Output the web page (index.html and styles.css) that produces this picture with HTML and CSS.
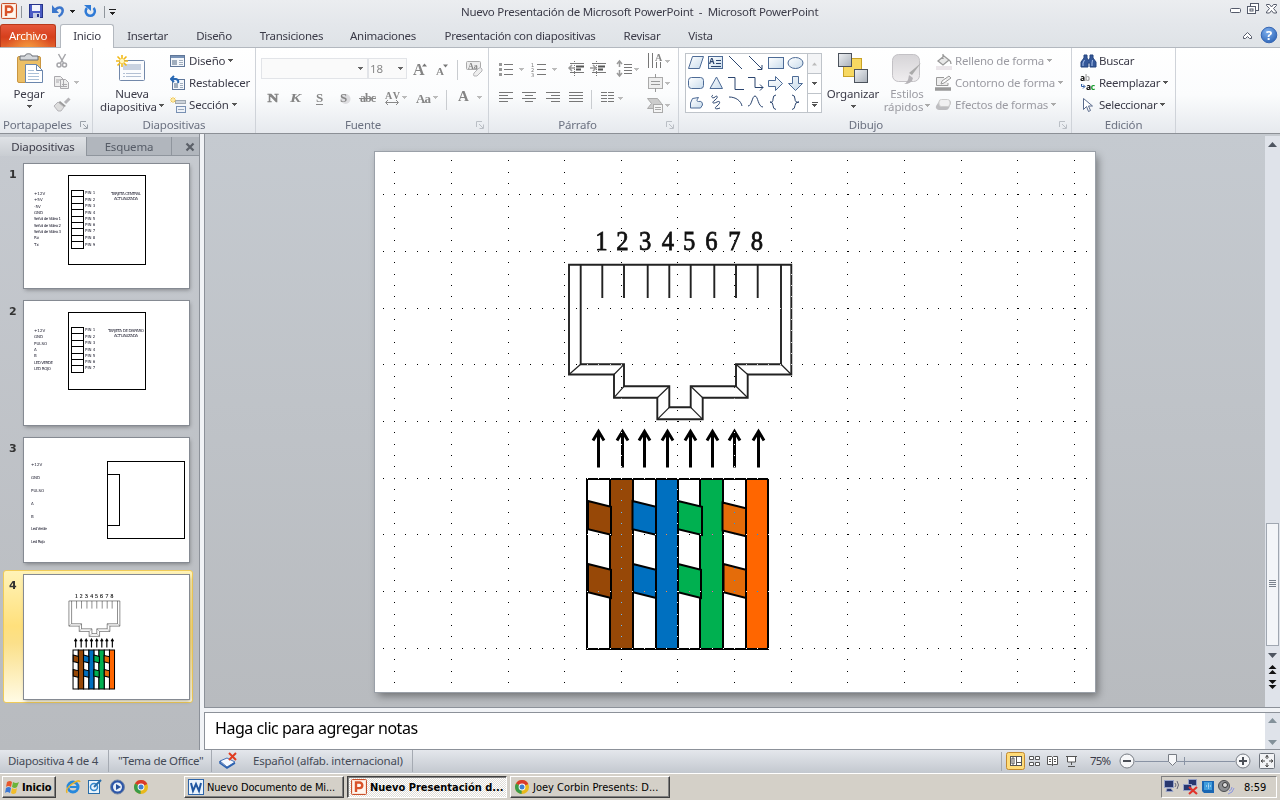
FILE: index.html
```html
<!DOCTYPE html>
<html lang="es">
<head>
<meta charset="utf-8">
<title>Nuevo Presentación de Microsoft PowerPoint</title>
<link rel="stylesheet" href="styles.css">
</head>
<body>
<svg class="defs" width="0" height="0">
  <defs>
    <linearGradient id="gBlue" x1="0" y1="0" x2="1" y2="1"><stop offset="0" stop-color="#fff"/><stop offset="1" stop-color="#c9dcec"/></linearGradient>
    <linearGradient id="gGray" x1="0" y1="0" x2="1" y2="1"><stop offset="0" stop-color="#eef0f3"/><stop offset="1" stop-color="#a9b0b9"/></linearGradient>
    <linearGradient id="gSoft" x1="0" y1="0" x2="0" y2="1"><stop offset="0" stop-color="#d6d4d7"/><stop offset="1" stop-color="#efedef"/></linearGradient>
    <radialGradient id="gHelp" cx=".4" cy=".3" r=".8"><stop offset="0" stop-color="#7fb0ee"/><stop offset="1" stop-color="#2860b4"/></radialGradient>
    <path id="car" d="M0 0h5v1h-1v1h-1v1h-1v-1h-1v-1h-1z"/>
    <g id="launch" fill="none" stroke="#9ba1a9"><path d="M.5 6V.5H6"/><path d="M3 3l4 4M7.500 3.500v4h-4"/></g>
    <g id="pp"><rect x=".5" y=".5" width="15" height="15" rx="1" fill="#fbe3d5" stroke="#c8502a"/><rect x="2" y="2" width="12" height="12" fill="#fff6ef"/><path d="M5 13V3.500h3.500a2.700 2.700 0 0 1 0 5.600H5" fill="none" stroke="#d9532a" stroke-width="2.400"/></g>
    <g id="chrome"><circle cx="7" cy="7" r="7" fill="#e9b91c"/><path d="M7 7L1 3.400A7 7 0 0 1 13.300 4z" fill="#d93a2b"/><path d="M7 7L1 3.400A7 7 0 0 0 6.500 14z" fill="#3a9b48"/><circle cx="7" cy="7" r="3.400" fill="#fff"/><circle cx="7" cy="7" r="2.500" fill="#3f7fd0"/></g>
    <g id="spark" stroke="#f2b917" stroke-width="1.600"><path d="M6 0v12M0 6h12M1.500 1.500l9 9M10.500 1.500l-9 9"/><circle cx="6" cy="6" r="2.200" fill="#fff7c0" stroke="none"/></g>
    <g id="figure">
      <g class="jack">
        <path d="M569 264.700V374.500H614V397.700H657.300V419.300H702.700V397.700H747.700V374.500H791.300V264.700Z"/>
        <path d="M580.700 264.700V364.300H624V386.300H669.300V407.300H690.700V386.300H736V364.300H781V264.700"/>
        <path d="M602.300 265v33M624 265v33M647.700 265v33M669.300 265v33M690.700 265v33M714.300 265v33M736 265v33M757.700 265v33"/>
        <path class="miter" d="M569 374.500l11.700-10.200M614 374.500l10-10.200M614 397.700l10-11.400M657.300 397.700l12-11.400M657.300 419.300l12-12M702.700 419.300l-12-12M702.700 397.700l-12-11.400M747.700 397.700l-11.700-11.400M747.700 374.500l-11.700-10.200M791.300 374.500l-10.300-10.200"/>
      </g>
      <g class="digits" transform="scale(.88 1)"><text x="683.500" y="250">1</text><text x="707.400" y="250">2</text><text x="733" y="250">3</text><text x="759" y="250">4</text><text x="783" y="250">5</text><text x="808.300" y="250">6</text><text x="834.700" y="250">7</text><text x="860" y="250">8</text></g>
      <path class="arrows" d="M598.500 467.500V432m-5.500 8.500l5.500-9 5.500 9M622.500 467.500V432m-5.500 8.500l5.500-9 5.500 9M644.500 467.500V432m-5.500 8.500l5.500-9 5.500 9M667.500 467.500V432m-5.500 8.500l5.500-9 5.500 9M690.500 467.500V432m-5.500 8.500l5.500-9 5.500 9M712.500 467.500V432m-5.500 8.500l5.500-9 5.500 9M734.500 467.500V432m-5.500 8.500l5.500-9 5.500 9M758.500 467.500V432m-5.500 8.500l5.500-9 5.500 9"/>
      <g class="wires">
        <g fill="#fff"><path d="M587 479h23v170h-23zM633 479h23v170h-23zM678 479h22v170h-22zM723 479h23v170h-23z"/></g>
        <path fill="#974807" d="M610 479h23v170h-23z"/>
        <path fill="#0070c0" d="M656 479h22v170h-22z"/>
        <path fill="#00b050" d="M700 479h23v170h-23z"/>
        <path fill="#ff6600" d="M746 479h22v170h-22z"/>
        <path fill="#974807" d="M588 501l23 5.700v28l-23-5.400zM588 564l23 5.700v28.300l-23-5.700z"/>
        <path fill="#0070c0" d="M632.500 501l23.500 5.700v28l-23.500-5.400zM633 564l23 5.700v28.300l-23-5.700z"/>
        <path fill="#00b050" d="M678 501l24 5.700v28.300l-24-5.700zM678 564l23 5.700v28.300l-23-5.700z"/>
        <path fill="#e46c0a" d="M722.500 502.500l23.500 5.700v28l-23.500-5.700zM723.500 564l22.500 5.700v28.300l-22.500-5.700z"/>
      </g>
    </g>
  </defs>
</svg>

<div class="app">
  <header class="titlebar">
    <svg class="quick" width="120" height="24" viewBox="0 0 120 24">
      <use href="#pp" x="1" y="3"/>
      <path d="M21.500 6v12M104.500 6v12" stroke="#8f959c"/>
      <rect x="29.500" y="4.500" width="13" height="13" fill="#4a5cc4" stroke="#26348a"/><rect x="32" y="5" width="8" height="6" fill="#f3f5fb"/><rect x="33" y="13" width="7" height="5" fill="#c7cfe4"/><rect x="37" y="14" width="2" height="3" fill="#26348a"/>
      <path d="M55.500 9.500c4-4 8-1.500 7 2.500-.5 2-2 3.500-4 4.500" fill="none" stroke="#3b76cc" stroke-width="2.500"/><path d="M52 5v8h7z" fill="#3b76cc"/>
      <use href="#car" x="70" y="10" fill="#222"/>
      <path d="M93.500 8a4.600 4.600 0 1 1-6.500 0" fill="none" stroke="#2f7ad6" stroke-width="2.500"/><path d="M84 5h7v6z" fill="#2f7ad6"/>
      <path d="M109 9.500h7" stroke="#222"/><use href="#car" x="110" y="12" fill="#222"/>
    </svg>
    <span class="caption">Nuevo Presentación de Microsoft PowerPoint &nbsp;-&nbsp; Microsoft PowerPoint</span>
    <svg class="winbtns" width="54" height="24" viewBox="1226 0 54 24" fill="#fff" stroke="#555b6b">
      <rect x="1230.500" y="8.500" width="10" height="4" rx="1"/><rect x="1250.500" y="3.500" width="8" height="7"/><rect x="1247.500" y="6.500" width="8" height="7"/><rect x="1250" y="9" width="3" height="2"/>
      <path d="M1266.500 4.500h3l2 2.500 2-2.500h3v1l-3 3 3 3.500v1h-3l-2-2.500-2 2.500h-3v-1l3-3.500-3-3z"/>
    </svg>
  </header>
  <nav class="tabs">
    <span class="tab file">Archivo</span><span class="tab active">Inicio</span><span class="tab w67">Insertar</span><span class="tab w66">Diseño</span><span class="tab w89">Transiciones</span><span class="tab w94">Animaciones</span><span class="tab w180">Presentación con diapositivas</span><span class="tab w64">Revisar</span><span class="tab w53">Vista</span>
    <svg class="help" width="44" height="24" viewBox="1236 24 44 24"><path d="M1243.500 36.500l4-4 4 4v2h-2l-2-2-2 2h-2z" fill="#fff" stroke="#555b6b"/><circle cx="1269" cy="35" r="7.800" fill="url(#gHelp)" stroke="#3767b4"/><text x="1269" y="40" class="q">?</text></svg>
  </nav>

  <section class="ribbon">
    <div class="group g-clip">
      <div class="body">
        <div class="big"><svg width="28" height="36" viewBox="15 50 28 36"><rect x="17.500" y="56.500" width="23" height="26" rx="1.500" fill="#ecbf66" stroke="#c99641"/><path d="M20 60v-4h5c0-3 7-3 7 0h6v4z" fill="#d4d7db" stroke="#6a6f76"/><path d="M25.500 64.500h11l6 6v12h-17z" fill="#fff" stroke="#6a86ad"/><path d="M36.500 64.500v6h6" fill="none" stroke="#6a86ad"/><path d="M28 70.500h6M28 73.500h11M28 76.500h11M28 79.500h11" stroke="#aac0d8"/></svg><span>Pegar</span><svg width="7" height="5" fill="#555"><use href="#car" x="1" y="1"/></svg></div>
        <svg width="32" height="70" viewBox="52 48 32 70"><g fill="none" stroke="#a6a6aa" stroke-width="1.500"><path d="M58.500 54l5 9M65.500 54l-5 9"/><circle cx="59" cy="65" r="2"/><circle cx="64.500" cy="65" r="2"/></g><g fill="#eee" stroke="#aaa9ad"><path d="M54.500 76.500h6l3 3v7h-9zM60.500 79.500h5l3 3v6h-8z"/><path d="M62 84.500h5M62 86.500h5M56 80h4M56 82h3"/></g><use href="#car" x="74" y="81" fill="#bbb"/><path d="M69.500 98.500l-4.500 4.500" stroke="#b5b4b8" stroke-width="3"/><path d="M60 101l6 5-2 1-6-4z" fill="#999"/><path d="M58 102l6 5-3 4h-3l-4-5z" fill="#ddd" stroke="#b5b4b8"/></svg>
      </div>
      <div class="label"><span>Portapapeles</span><svg width="8" height="8"><use href="#launch"/></svg></div>
    </div>
    <div class="group g-slides">
      <div class="body">
        <div class="big"><svg width="34" height="36" viewBox="114 50 34 36"><rect x="119.500" y="60.500" width="25" height="20" rx="1" fill="#fbfcfe" stroke="#7288aa"/><rect x="123" y="64" width="18" height="6" fill="#c9d2e1"/><path d="M123 73.500h18M123 76.500h18" stroke="#b3c0d4" stroke-dasharray="2 1 20"/><use href="#spark" x="116" y="55"/></svg><span>Nueva</span><span class="drop">diapositiva<svg width="7" height="4" fill="#555"><use href="#car" x="2"/></svg></span></div>
        <div class="stack">
          <div><svg width="17" height="16"><rect x=".5" y="2.500" width="14" height="11" fill="#f4f7fb" stroke="#5f7698"/><path d="M1 4h13" stroke="#7792b7" stroke-width="2"/><path d="M2 7h5v5h-5z" fill="#a0adbd"/><path d="M9 7.500h4M9 9.500h4M9 11.500h4" stroke="#a0adbd"/></svg><span>Diseño</span><svg width="7" height="4" fill="#555"><use href="#car" x="1"/></svg></div>
          <div><svg width="17" height="16"><rect x="2.500" y="4.500" width="12" height="10" fill="#f4f7fb" stroke="#5f7698"/><path d="M4 8h4v5h-4z" fill="#a0adbd"/><path d="M10 8.500h3M10 10.500h3M10 12.500h3" stroke="#a0adbd"/><path d="M1 4h5q3 1 2 4M4 1L1 4l3 3" fill="none" stroke="#2868b3" stroke-width="2"/></svg><span>Restablecer</span></div>
          <div><svg width="17" height="16"><rect x="5.500" y="3.500" width="10" height="3" fill="#cdd3da" stroke="#9ea7b1"/><rect x="6.500" y="9.500" width="9" height="6" fill="#eef2f8" stroke="#7890b3"/><path d="M8 12.500h6" stroke="#9ba9ba"/><use href="#spark" transform="scale(.5)"/></svg><span>Sección</span><svg width="7" height="4" fill="#555"><use href="#car" x="1"/></svg></div>
        </div>
      </div>
      <div class="label"><span>Diapositivas</span></div>
    </div>
    <div class="group g-font">
      <svg class="tools" width="232" height="70" viewBox="257 48 232 70">
        <rect x="261.500" y="58.500" width="106" height="20" fill="#fafafa" stroke="#e2e4e8"/><rect x="368.500" y="58.500" width="38" height="20" fill="#fafafa" stroke="#e2e4e8"/>
        <g fill="#666"><use href="#car" x="358" y="67"/><use href="#car" x="398" y="67"/></g>
        <text class="ui" x="370" y="73" fill="#888" textLength="13">18</text>
        <circle cx="345.500" cy="99" r="5" fill="#dddde0"/>
        <g class="serif"><text x="413" y="75" font-size="16">A</text><text x="436" y="75" font-size="11">A</text><text x="267.500" y="102" font-size="13" stroke="#858585" stroke-width=".5" textLength="11" lengthAdjust="spacingAndGlyphs">N</text><text x="290" y="102" font-size="13" font-style="italic" textLength="11" lengthAdjust="spacingAndGlyphs">K</text><text x="316" y="102" font-size="13">S</text><text x="340" y="102" font-size="13">S</text><text x="360" y="102" font-size="12" textLength="16">abc</text><text x="385" y="99" font-size="10" textLength="15">AV</text><text x="416" y="103" font-size="13" textLength="15">Aa</text><text x="458" y="101" font-size="15">A</text></g>
        <path d="M316 104.500h7M359 98.500h17M386 102.500h12M388 100l-2.500 2.500L388 105M396 100l2.500 2.500L396 105" stroke="#888" fill="none"/>
        <path d="M422 66.500h5l-2.500-3zM443 64.500h5l-2.500 3z" fill="#777"/>
        <path d="M457.500 60v20M446.500 90v20" stroke="#c9ccd0"/>
        <g fill="#bbb"><use href="#car" x="402" y="96"/><use href="#car" x="433" y="96"/><use href="#car" x="477" y="96"/></g>
        <rect x="466.500" y="61.500" width="14" height="8" rx="1" fill="#eee" stroke="#aaa"/><text x="468" y="69" font-size="8" class="serif">Aa</text><path d="M474 73l5-5q2-1 3 1v2l-5 5h-3q-1-1 0-3z" fill="#eee" stroke="#b5b5b8"/>
      </svg>
      <div class="label"><span>Fuente</span><svg width="8" height="8" opacity=".6"><use href="#launch"/></svg></div>
    </div>
    <div class="group g-para">
      <svg class="tools" width="188" height="70" viewBox="491 48 188 70" fill="none" stroke="#777">
        <path d="M505 64.500h9M505 69.500h9M505 74.500h9M538 64.500h9M538 69.500h9M538 74.500h9"/><path d="M500 64.500h3M500 69.500h3M500 74.500h3" stroke="#999" stroke-width="3"/>
        <g class="tiny" stroke="none"><text x="532" y="67">1</text><text x="532" y="72">2</text><text x="532" y="77">3</text></g>
        <g fill="#bbb" stroke="none"><use href="#car" x="520" y="68"/><use href="#car" x="553" y="68"/><use href="#car" x="635" y="68"/><use href="#car" x="619" y="97"/><use href="#car" x="666" y="60"/><use href="#car" x="666" y="82"/><use href="#car" x="666" y="104"/></g>
        <path d="M571 63.500h14M571 72.500h14M593 63.500h14M593 72.500h14"/><path d="M575.500 61v15M597.500 61v15" stroke-dasharray="1 1"/><path d="M577 66.500h8M577 69.500h5M599 66.500h7M599 69.500h5" stroke="#555" stroke-width="2"/><path d="M570 68h6M573 65l-3 3 3 3M591 68h5M594 65l3 3-3 3" stroke="#999" stroke-width="1.500"/>
        <path d="M625 64.500h8M625 67.500h8M625 70.500h8M625 73.500h8"/><path d="M620.500 61v6M618 64l2.500-3 2.500 3M620.500 70v6M618 73l2.500 3 2.500-3" stroke="#999" stroke-width="1.500"/>
        <path d="M500 92.500h14M500 95.500h9M500 98.500h14M500 101.500h9M523 92.500h14M526 95.500h8M523 98.500h14M526 101.500h8M547 92.500h14M552 95.500h9M547 98.500h14M552 101.500h9M570 92.500h14M570 95.500h14M570 98.500h14M570 101.500h14M602 92.500h6M602 95.500h6M602 98.500h6M602 101.500h6M609 92.500h6M609 95.500h6M609 98.500h6M609 101.500h6"/>
        <path d="M592.500 90v19" stroke="#c9ccd0"/>
        <path d="M649.500 53v15M653.500 53v15M657.500 62v6M661.500 62v6"/><text x="656" y="61" font-size="10" class="serif" stroke="none">A</text>
        <rect x="649.500" y="77.500" width="14" height="11" fill="#eee" stroke="#aaa"/><path d="M652 81.500h9M652 84.500h9M656.500 74v4M656.500 88v4" stroke="#999"/>
        <path d="M648.500 98.500h10l4 5-3 5h-11l4-5z" fill="#ccc" stroke="#aaa"/><rect x="654.500" y="104.500" width="9" height="8" fill="#f5f5f5" stroke="#aaa"/><path d="M656 107.500h6M656 109.500h6" stroke="#aaa"/>
      </svg>
      <div class="label"><span>Párrafo</span><svg width="8" height="8" opacity=".6"><use href="#launch"/></svg></div>
    </div>
    <div class="group g-draw">
      <div class="body">
        <svg class="shapes" width="138" height="62" viewBox="684 52 138 62">
          <rect x="685.500" y="53.500" width="136" height="59" fill="#fff" stroke="#bfc4ca"/><path d="M807.500 54v58M808 73.500h13M808 93.500h13" stroke="#bfc4ca"/><rect x="808" y="54" width="13" height="19" fill="#f3f4f6"/>
          <path d="M812 65.500h5l-2.500-3z" fill="#bbb"/><use href="#car" x="812" y="82" fill="#555"/><path d="M812 102.500h6" stroke="#555"/><use href="#car" x="812" y="104" fill="#555"/>
          <g fill="url(#gBlue)" stroke="#4d6b96"><path d="M692.500 56.500h11l-4 12h-11z"/><rect x="708.500" y="56.500" width="14" height="12"/><rect x="768.500" y="57.500" width="15" height="11"/><ellipse cx="795.500" cy="63" rx="7.500" ry="5.500"/><rect x="688.500" y="77.500" width="15" height="11" rx="3"/><path d="M716.500 77l6 11.500h-12.500z"/><path d="M768.500 80.500h7v-4l7 7-7 7v-4h-7zM792.500 76.500h6v7h4l-7 7-7-7h4z"/><path d="M692.500 98.500l6-1q-3 4 0 4 4-1 4 3.500l-2 3h-10v-5z"/></g>
          <g fill="none" stroke="#2b456f"><path d="M729 56l13 13M749 56l13 13M757.500 69.500h4.500v-4.500M728 77.500h7v12h9M748 77.500h7v10h8M760 84.500l3 3-3 3M713 95c-3 2 0 4 2 2s4 0 0 3-2 4 2 2 3 2 0 4-2 4 3 2M729 97c7 0 12 4 13 9M748 106c4 0 4-10 7-10s3 11 8 11M776 95q-3 0-3 4t-3 3q3 0 3 3.500t3 4M792 95q3 0 3 4t4 3q-4 0-4 3.500t-3 4M716 60.500h5M716 63.500h5M711 66.500h10"/></g><text x="709" y="64" font-size="8" font-weight="bold" class="blue">A</text>
        </svg>
        <div class="big org"><svg width="32" height="36" viewBox="836 50 32 36"><rect x="842.500" y="58.500" width="18" height="18" fill="#f7d861" stroke="#c9a227"/><rect x="837.500" y="53.500" width="13" height="13" fill="url(#gGray)" stroke="#4b525c"/><rect x="853.500" y="69.500" width="13" height="13" fill="url(#gGray)" stroke="#4b525c"/></svg><span>Organizar</span><svg width="7" height="5" fill="#555"><use href="#car" x="1" y="1"/></svg></div>
        <div class="big sty"><svg width="32" height="36" viewBox="892 50 32 36"><rect x="893.500" y="54.500" width="27" height="27" rx="6" fill="url(#gSoft)" stroke="#c3c1c5"/><path d="M922 63l-9 12-3-2z" fill="#aaa"/><path d="M905 84q4-1 5-9l4 3q-1 6-9 6z" fill="#b5b3b7"/></svg><span>Estilos</span><span class="drop">rápidos<svg width="7" height="4" fill="#aaa"><use href="#car" x="2"/></svg></span></div>
        <div class="stack off">
          <div><svg width="18" height="17"><path d="M3 8l6-5 5 4-6 5zM8 6V1M14 7q2 1 2 4" fill="#e8e8e8" stroke="#999" stroke-width="1.300"/><path d="M1 15h16" stroke="#ebe6ea" stroke-width="4"/></svg><span>Relleno de forma</span><svg width="7" height="4" fill="#aaa"><use href="#car" x="1"/></svg></div>
          <div><svg width="18" height="17"><path d="M9 2.500H1.500v8H13V8M6 9l1-3 7-5 2 2-7 5z" fill="#eee" stroke="#999"/><path d="M0 14h16" stroke="#999" stroke-width="3.500"/></svg><span>Contorno de forma</span><svg width="7" height="4" fill="#aaa"><use href="#car" x="1"/></svg></div>
          <div><svg width="18" height="17"><path d="M5 3h8q3 0 3 3l-2 5q-1 2-3 2H4q-4-1-3-4z" fill="#bdbdc0"/><rect x="4" y="2.500" width="11" height="7" rx="2.500" fill="#f0f0f1" stroke="#ccc"/></svg><span>Efectos de formas</span><svg width="7" height="4" fill="#aaa"><use href="#car" x="1"/></svg></div>
        </div>
      </div>
      <div class="label"><span>Dibujo</span><svg width="8" height="8" opacity=".6"><use href="#launch"/></svg></div>
    </div>
    <div class="group g-edit">
      <div class="body"><div class="stack">
        <div><svg width="19" height="16"><path d="M4 2h3v3l1 2h1l1-2V2h3v3l3 4v5h-6v-4h-2v4H1V9l3-4z" fill="#35589a" stroke="#24447f"/><path d="M4.500 7L3 10v3M12.500 7L12 10v3" stroke="#a9c1ea" fill="none"/></svg><span>Buscar</span></div>
        <div><svg width="19" height="20" class="swap"><text x="0" y="8">a<tspan fill="#aaa">b</tspan></text><text x="6" y="17">a<tspan fill="#159a2c">c</tspan></text><path d="M1.500 11v2.500h3M3 11.500l2 2-2 2" fill="none" stroke="#2c5ba5"/></svg><span>Reemplazar</span><svg width="7" height="4" fill="#555"><use href="#car" x="1"/></svg></div>
        <div><svg width="19" height="16"><path d="M3.500 1.500v11l3-3 2 5 2-1-2-4.500h4z" fill="#fff" stroke="#5a6b8c"/></svg><span>Seleccionar</span><svg width="7" height="4" fill="#555"><use href="#car" x="1"/></svg></div>
      </div></div>
      <div class="label"><span>Edición</span></div>
    </div>
  </section>

  <main class="work">
    <aside class="panel">
      <div class="ptabs"><span class="pt on">Diapositivas</span><span class="pt out">Esquema</span><span class="px"><svg width="10" height="10"><path d="M1.500 1.500l7 7M8.500 1.500l-7 7" stroke="#5b6068" stroke-width="2.200"/></svg></span></div>
      <div class="item"><b>1</b><svg class="thumb" viewBox="24 164 165 124">
        <g class="lines"><rect x="68.500" y="175.500" width="77" height="89"/><path d="M71.500 190.500h12v58h-12zM71.500 196.500h12M71.500 203.500h12M71.500 209.500h12M71.500 216.500h12M71.500 222.500h12M71.500 228.500h12M71.500 235.500h12M71.500 241.500h12"/></g>
        <g class="t"><text x="34" y="195">+12V</text><text x="34" y="201">+5V</text><text x="34" y="208">-5V</text><text x="34" y="214">GND</text><text x="34" y="220" textLength="27">Señal de Video 1</text><text x="34" y="227" textLength="27">Señal de Video 2</text><text x="34" y="233" textLength="27">Señal de Video 3</text><text x="34" y="239">Rx</text><text x="34" y="246">Tx</text>
        <text x="85" y="194">PIN 1</text><text x="85" y="201">PIN 2</text><text x="85" y="207">PIN 3</text><text x="85" y="214">PIN 4</text><text x="85" y="220">PIN 5</text><text x="85" y="226">PIN 6</text><text x="85" y="232">PIN 7</text><text x="85" y="239">PIN 8</text><text x="85" y="246">PIN 9</text><text x="111" y="195" textLength="30">TARJETA CENTRAL</text><text x="114" y="200" textLength="24">ACTUALIZADA</text></g></svg></div>
      <div class="item"><b>2</b><svg class="thumb" viewBox="24 301 165 124">
        <g class="lines"><rect x="68.500" y="312.500" width="77" height="77"/><path d="M71.500 327.500h12v45h-12zM71.500 333.500h12M71.500 340.500h12M71.500 346.500h12M71.500 353.500h12M71.500 359.500h12M71.500 365.500h12"/></g>
        <g class="t"><text x="34" y="332">+12V</text><text x="34" y="338">GND</text><text x="34" y="345">PULSO</text><text x="34" y="351">A</text><text x="34" y="357">B</text><text x="34" y="364" textLength="19">LED VERDE</text><text x="34" y="370" textLength="17">LED ROJO</text>
        <text x="85" y="331">PIN 1</text><text x="85" y="338">PIN 2</text><text x="85" y="344">PIN 3</text><text x="85" y="351">PIN 4</text><text x="85" y="357">PIN 5</text><text x="85" y="363">PIN 6</text><text x="85" y="369">PIN 7</text><text x="108" y="332" textLength="36">TARJETA DE DISPARO</text><text x="114" y="337" textLength="24">ACTUALIZADA</text></g></svg></div>
      <div class="item"><b>3</b><svg class="thumb" viewBox="24 438 165 124">
        <g class="lines"><rect x="107.500" y="461.500" width="77" height="77"/><path d="M107.500 474.500h12v51h-12"/></g>
        <g class="t"><text x="31" y="466">+12V</text><text x="31" y="479">GND</text><text x="31" y="492">PULSO</text><text x="31" y="505">A</text><text x="31" y="518">B</text><text x="31" y="530" textLength="16">Led Verde</text><text x="31" y="543" textLength="14">Led Rojo</text></g></svg></div>
      <div class="item sel"><b>4</b><svg class="thumb mini" viewBox="373 152 720 540"><use href="#figure"/></svg></div>
    </aside>
    <div class="editor">
      <div class="stage">
        <svg class="slide" width="720" height="540" viewBox="375 152 720 540"><rect x="375" y="152" width="720" height="540" fill="#fff"/><use href="#figure"/>
          <path class="grid" d="M382.800 194.500H1095M382.800 251.500H1095M382.800 308.500H1095M382.800 364.500H1095M382.800 421.500H1095M382.800 478.500H1095M382.800 534.500H1095M382.800 591.500H1095M382.800 648.500H1095M394.500 160.200V692M451.500 160.200V692M508.500 160.200V692M564.500 160.200V692M621.500 160.200V692M677.500 160.200V692M734.500 160.200V692M791.500 160.200V692M847.500 160.200V692M904.500 160.200V692M961.500 160.200V692M1017.500 160.200V692M1074.500 160.200V692"/>
        </svg>
        <svg class="scroll" width="15" height="571" viewBox="1265 136 15 571"><path d="M1268 147h9l-4.500-5z" fill="#4e5560"/><rect x="1266.500" y="523.500" width="12" height="122" fill="#f3f5f8" stroke="#a0a7b1"/><path d="M1269 580.500h7M1269 582.500h7M1269 584.500h7M1269 586.500h7" stroke="#7a828d"/><path d="M1268 653h9l-4.500 5z" fill="#4e5560"/><path d="M1268.500 669h8l-4-4zM1268.500 674h8l-4-4zM1268.500 680h8l-4 4zM1268.500 685h8l-4 4z" fill="#111"/></svg>
      </div>
      <div class="notes"><span>Haga clic para agregar notas</span><svg class="scroll" width="15" height="36"><path d="M3 10h9l-4.500-5zM3 27h9l-4.500 5z" fill="#83919a"/></svg></div>
    </div>
  </main>

  <footer class="status">
    <span class="s1">Diapositiva 4 de 4</span><span class="s2">"Tema de Office"</span><svg width="34" height="22" viewBox="212 751 34 22"><path d="M220 762l7-3 8 4-8 5z" fill="#f5f9ff" stroke="#4772b5"/><path d="M220 762v2l7 5 8-5" fill="none" stroke="#2c62b0" stroke-width="1.500"/><path d="M229 754l7 7M236 754l-7 7" stroke="#e03c20" stroke-width="2"/></svg><span class="s3">Español (alfab. internacional)</span>
    <svg class="views" width="279" height="22" viewBox="1001 750 279 22" fill="none" stroke="#555">
      <path d="M1001.500 752v19" stroke="#a5aab2"/><rect x="1006.500" y="752.500" width="18" height="17" rx="2" fill="#ffdc79" stroke="#c28a30"/><rect x="1010.500" y="756.500" width="11" height="9" fill="#fff"/><path d="M1012 758h2v6h-2zM1016.500 757v9M1017 762.500h4"/>
      <path d="M1029.500 756.500h4v3h-4zM1035.500 756.500h4v3h-4zM1029.500 762.500h4v3h-4zM1035.500 762.500h4v3h-4z" fill="#fff"/><path d="M1047.500 756.500h4l1 1 1-1h4v8h-4l-1 1-1-1h-4zM1052.500 757v9M1049 759.500h2M1049 761.500h2M1054 759.500h2M1054 761.500h2" fill="#fff"/><path d="M1066 756.500h11M1067.500 757v5h8v-5M1071.500 762v3M1068 766.500h7" fill="#fff"/>
      <text class="ui pct" x="1090" y="765" textLength="21">75%</text>
      <path d="M1135 761.500h100M1184.500 757v8" stroke="#8993a4"/><g fill="#f6f7f9" stroke="#777c84"><circle cx="1127" cy="761" r="7"/><circle cx="1243" cy="761" r="7"/><path d="M1168.500 754.500h8v7l-4 4-4-4z"/></g><path d="M1123 761h8M1239 761h8M1243 757v8" stroke="#4b4f57" stroke-width="2"/>
      <rect x="1259.500" y="753.500" width="15" height="15" rx="1" fill="#f2f3f5" stroke="#6e747d"/><path d="M1267 755v4M1267 763v4M1261 761h4M1269 761h4M1265.500 757.500l1.500-2 1.500 2M1265.500 765l1.500 2 1.500-2M1263 759.500l-2 1.500 2 1.500M1271 759.500l2 1.500-2 1.500" stroke="#444"/>
    </svg>
  </footer>

  <footer class="taskbar">
    <span class="start"><svg width="17" height="16"><path d="M2 3q3-2 5 0l-1 5q-3-2-5 0z" fill="#e7572b"/><path d="M8 3q3 2 6 0l-2 5q-2 2-5 0z" fill="#6bb43a"/><path d="M1 9q3-2 5 0l-1 5q-3-2-5 0z" fill="#3b78d4"/><path d="M7 9q3 2 5 0l-1 5q-3 2-5 0z" fill="#f1bd2b"/></svg><span>Inicio</span></span>
    <svg class="launchers" width="98" height="24" viewBox="58 775 98 24">
      <circle cx="73" cy="787" r="5" fill="none" stroke="#2688dc" stroke-width="3"/><path d="M70 787h9" stroke="#2688dc" stroke-width="2"/><path d="M67 793q-2-4 5-9t8-2" fill="none" stroke="#e9b42a" stroke-width="1.500"/>
      <rect x="88.500" y="780.500" width="11" height="13" fill="#e9f4fc" stroke="#286da9"/><circle cx="94" cy="787" r="3.500" fill="none" stroke="#3287cc" stroke-width="1.500"/><path d="M94 787l7-7" stroke="#286da9" stroke-width="2"/>
      <circle cx="117.500" cy="787" r="7" fill="#2c55a8" stroke="#7488a5"/><circle cx="117.500" cy="787" r="4.500" fill="#e9f0f8"/><path d="M116 784l5 3-5 3z" fill="#254f9b"/><use href="#chrome" x="134" y="780"/>
    </svg>
    <span class="task t1"><svg width="16" height="16"><rect x=".5" y=".5" width="15" height="15" fill="#eaf3fc" stroke="#2d64a8"/><path d="M3 4l2 8 3-7 3 7 2-8" fill="none" stroke="#2056a0" stroke-width="2"/></svg><span>Nuevo Documento de Mi...</span></span>
    <span class="task t2"><svg width="16" height="16"><use href="#pp"/></svg><span>Nuevo Presentación d...</span></span>
    <span class="task t3"><svg width="16" height="16"><use href="#chrome" x="1" y="1"/></svg><span>Joey Corbin Presents: D...</span></span>
    <span class="tray"><svg width="76" height="20" viewBox="1163 777 76 20"><g fill="#27376f" stroke="#98a3c8"><rect x="1165.500" y="780.500" width="9" height="7"/><path d="M1167 791.500l1-3h4l2 3z"/><rect x="1189.500" y="779.500" width="8" height="6"/><rect x="1184.500" y="784.500" width="8" height="6"/></g><path d="M1176 783q2 2 0 4M1178 781q3 4 0 8" fill="none" stroke="#667"/><path d="M1190 787l8 7M1198 787l-8 7" stroke="#e1332b" stroke-width="2.200"/><path d="M1203 781h12v12h-10l-2-2z" fill="#1a66b2"/><rect x="1205" y="782" width="8" height="8" fill="#3f9ddd"/><path d="M1207 786h5M1209.500 783.500v5" stroke="#d6efff" stroke-dasharray="1"/><circle cx="1225" cy="786" r="5.500" fill="#8d8f92" stroke="#4c4d50"/><circle cx="1226" cy="785" r="2.500" fill="#dedede" stroke="#333"/><path d="M1230 791q3-1 3-4M1229 794q5-1 6-6" fill="none" stroke="#8994e0"/></svg><span>8:59</span></span>
  </footer>
</div>
</body>
</html>
```

FILE: styles.css
```css
* { box-sizing: border-box; }
body { margin: 0; }
svg { display: block; flex: none; }
.defs { position: absolute; }
.app {
  width: 1280px; height: 800px; overflow: hidden;
  display: flex; flex-direction: column;
  font: 11.5px/14px "Noto Sans", "Open Sans", sans-serif;
  color: #3b3b48; white-space: nowrap; background: #dfe3e7;
}
.ui { font: 11.5px "Noto Sans", sans-serif; stroke: none; }
.pct { fill: #3b3b48; }

.titlebar { display: flex; height: 24px; background: linear-gradient(#ebedf0, #e4e7eb); }
.caption { width: 360px; margin-left: 341px; line-height: 24px; letter-spacing: -.27px; }
.winbtns { margin-left: auto; }

.tabs { display: flex; height: 24px; background: linear-gradient(#e4e7eb, #dfe3e7); border-bottom: 1px solid #b3b8bf; }
.tab { text-align: center; line-height: 24px; letter-spacing: -.3px; }
.file { width: 56px; margin-right: 4px; color: #fff; border-radius: 3px 3px 0 0; border: 1px solid #b83a1b; border-bottom: 0; line-height: 22px; background: radial-gradient(ellipse at 50% 110%, #f59a3e, transparent 60%), linear-gradient(#e5573b, #d63f1c 55%, #e2622c); }
.active { width: 54px; height: 24px; background: #fff; border: 1px solid #b3b8bf; border-bottom: 0; border-radius: 3px 3px 0 0; line-height: 22px; }
.w67 { width: 67px; } .w66 { width: 66px; } .w89 { width: 89px; } .w94 { width: 94px; }
.w180 { width: 180px; } .w64 { width: 64px; } .w53 { width: 53px; }
.help { margin-left: auto; }
.q { font: bold 13px "Open Sans", sans-serif; fill: #fff; text-anchor: middle; }

.ribbon { display: flex; height: 86px; flex: none; background: linear-gradient(#fff, #fbfcfd 55%, #e6e9ee); border-bottom: 1px solid #8c9096; }
.group { display: flex; flex-direction: column; border-right: 1px solid #cfd3d9; }
.g-clip { width: 93px; } .g-slides { width: 163px; } .g-font { width: 233px; }
.g-para { width: 190px; } .g-draw { width: 393px; } .g-edit { width: 104px; }
.body { display: flex; height: 70px; }
.tools { margin-left: 1px; }
.label { display: flex; align-items: center; height: 14px; color: #6b7180; letter-spacing: -.2px; }
.label span { flex: 1; text-align: center; }
.label svg { margin-right: 4px; }
.g-font .label span, .g-draw .label span { padding-right: 6px; }
.g-clip .label span { text-align: left; padding-left: 3px; }
.big { display: flex; flex-direction: column; align-items: center; padding-top: 2px; line-height: 13px; letter-spacing: -.15px; }
.big > span { margin-top: 1px; height: 12px; }
.big > svg:last-child { margin-top: 5px; }
.drop { display: flex; align-items: center; }
.g-clip .big { width: 58px; }
.g-clip .body > svg { margin-left: -6px; }
.g-slides .big { width: 77px; padding-left: 1px; }
.g-slides .big > svg { margin-left: -2px; }
.stack > div { display: flex; align-items: center; height: 22px; gap: 2px; }
.stack { padding-top: 2px; letter-spacing: -.18px; }
.shapes { margin: 4px 0 0 5px; }
.org { width: 60px; margin-left: 1px; }
.sty { width: 48px; color: #9b9ba2; }
.off { color: #9b9ba2; margin-left: 4px; letter-spacing: -.22px; }
.g-edit .stack { padding-left: 8px; letter-spacing: -.28px; }
.g-edit .stack > div { gap: 0; }
.g-edit .stack span + svg { margin-left: 2px; }
.serif { font-family: "Liberation Serif", serif; font-weight: bold; fill: #858585; }
.tiny { font: 5px "DejaVu Sans", sans-serif; fill: #777; }
.blue { fill: #2b456f; }
.swap { font: bold 8.5px/1 "Open Sans", sans-serif; overflow: visible; }

.work { display: flex; height: 616px; flex: none; }
.panel { width: 200px; background: linear-gradient(#c6cad0, #b8bbbf); border-right: 1px solid #8c9199; }
.ptabs { display: flex; height: 25px; padding-top: 3px; }
.pt { line-height: 19px; height: 19px; text-align: center; letter-spacing: -.15px; }
.on { width: 86px; background: linear-gradient(#dfe2e6, #c9cdd2); }
.out { width: 86px; background: #b1b6bd; border: 1px solid #8f959d; border-top: 0; color: #555b66; }
.px { width: 27px; height: 19px; border-bottom: 1px solid #8f959d; background: #b1b6bd; padding: 5px 0 0 13px; }
.item { display: flex; width: 190px; height: 133px; margin: 0 0 4px 3px; border: 1px solid transparent; padding: 4px 4px 4px 5px; }
.item b { flex: none; width: 15px; padding-top: 4px; font: bold 11px "DejaVu Sans", sans-serif; color: #333; }
.sel { border-color: #f0cb58; border-radius: 3px; background: linear-gradient(#fff3b8, #ffe07c 42%, #fbe08a 55%, #fffbe5); }
.thumb { width: 165px; height: 124px; background: #fff; box-shadow: 0 0 0 1px #858a92, 1px 2px 4px #0005; }
.lines { fill: none; stroke: #000; shape-rendering: crispEdges; }
.t { font: 4px "DejaVu Sans", sans-serif; fill: #223; }

.editor { width: 1080px; padding-left: 4px; background: #f1f3f6; }
.stage { display: flex; height: 574px; padding-top: 2px; border: solid #8c9199; border-width: 0 0 1px 1px; background: linear-gradient(#c5cad0, #b8bbbf); }
.slide { margin: 16px 0 0 170px; box-shadow: 0 0 0 1px #9aa0a8, 3px 4px 8px #0006; }
.scroll { margin-left: auto; background: #dfe3ea; }
.notes { display: flex; height: 38px; margin-top: 4px; border: 1px solid #8c9199; border-right: 0; background: #fff; color: #000; font: 16px/31px "Noto Sans", sans-serif; }
.notes span { padding-left: 10px; letter-spacing: -.46px; }
.jack { fill: none; stroke: #222; stroke-width: var(--j, 1.9px); }
.miter { stroke-width: 1.2px; }
.digits { font: 28px "Liberation Serif", serif; text-anchor: middle; fill: #111; stroke: #111; stroke-width: .8px; }
.arrows { fill: none; stroke: #000; stroke-width: var(--a, 3px); }
.wires { stroke: #000; stroke-width: var(--w, 2px); }
.mini { --w: 4.5px; --j: 2.2px; --a: 5px; }
.grid { stroke: #fff; stroke-dasharray: 1 10.34; shape-rendering: crispEdges; mix-blend-mode: difference; fill: none; }

.status { display: flex; height: 24px; flex: none; line-height: 22px; color: #444a56; background: linear-gradient(#e4e7ec, #c3c8cf); border-bottom: 1px solid #fff; }
.status span { border-right: 1px solid #a5aab2; height: 22px; letter-spacing: -.3px; }
.s1 { width: 109px; padding-left: 8px; }
.s2 { width: 103px; padding-left: 9px; }
.status .s3 { width: 167px; padding-left: 7px; letter-spacing: -.22px; }
.views { margin-left: auto; }

.taskbar { display: flex; height: 26px; flex: none; padding: 1px 3px 0 2px; background: #d4d0c8; color: #000; font: 11px/20px "DejaVu Sans Condensed", "DejaVu Sans", sans-serif; }
.start, .task { display: flex; align-items: center; height: 22px; border: 1px solid; border-color: #fff #404040 #404040 #fff; box-shadow: inset -1px -1px #808080; margin-top: 1px; }
.start { width: 54px; padding-left: 2px; font-weight: bold; letter-spacing: -.1px; }
.start span, .task span, .tray span { padding-top: 1px; }
.launchers { margin-left: 2px; }
.task { width: 160px; padding-left: 3px; gap: 3px; letter-spacing: -.15px; }
.t1 { margin-left: 28px; }
.t2 { margin-left: 3px; font-weight: bold; border-color: #404040 #fff #fff #404040; box-shadow: inset 1px 1px #808080; background: repeating-conic-gradient(#fff 0 25%, #dfdcd6 0 50%) 0 0 / 2px 2px; letter-spacing: 0; }
.t3 { margin-left: 3px; letter-spacing: 0; }
.tray { display: flex; width: 116px; height: 22px; margin: 1px 0 0 auto; border: 1px solid; border-color: #808080 #fff #fff #808080; }
.tray span { margin-left: 6px; }
```
